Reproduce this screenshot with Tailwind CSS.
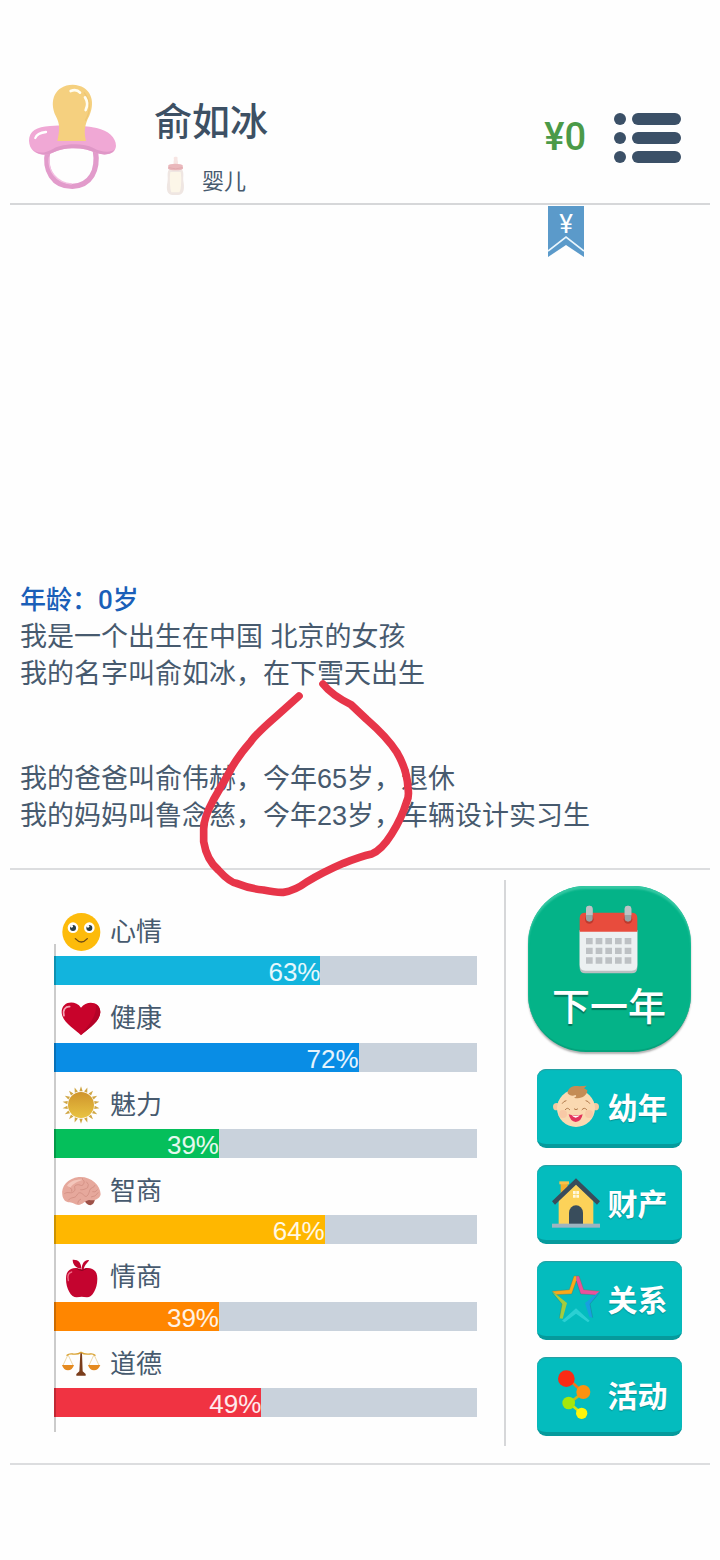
<!DOCTYPE html>
<html lang="zh-CN">
<head>
    <meta charset="UTF-8">
    <meta name="viewport" content="width=device-width, initial-scale=1.0">
    <title>人生模拟</title>
    <script src="https://cdn.jsdelivr.net/npm/@tailwindcss/browser@4"></script>
    <style>
        body {
            font-family: 'Liberation Sans', 'Noto Sans CJK SC', sans-serif;
        }
        .font-ui {
            font-family: Roboto, 'Noto Sans CJK SC', sans-serif;
        }
        .font-cjk {
            font-family: 'Noto Sans CJK SC', sans-serif;
        }
    </style>
</head>
<body class="bg-[#fefefe] text-[#475a6e]">
<div class="relative min-h-screen flex flex-col px-2.5 pt-[84px] pb-[95px]">

    <!-- Header -->
    <header class="relative flex items-start border-b-2 border-[#d6d7d9] pl-[18px] pr-7 pb-[7px]">
        <svg class="w-[89px] h-[106px] shrink-0" viewBox="84 70 267 318" aria-hidden="true">
            <path d="M144 268C130 330 160 377 217 377C272 375 296 330 286 268" fill="none" stroke="#e29bcb" stroke-width="16"/>
            <path d="M148 290C142 330 170 367 215 370" fill="none" stroke="#f3c0e2" stroke-width="4"/>
            <path d="M87 240C87 212 110 198 150 196C200 191 250 194 290 202C325 210 348 230 348 256C346 280 320 286 292 278C268 268 245 262 215 263C180 264 165 275 145 281C112 286 88 270 87 240Z" fill="#f0a8d5"/>
            <path d="M95 262C110 284 140 276 160 264C190 248 250 246 280 262C305 276 335 276 345 266C334 284 310 283 292 278C268 268 245 262 215 263C180 264 165 275 145 281C122 284 104 276 95 262Z" fill="#df97c7"/>
            <path d="M172 241C180 205 180 190 167 165C146 120 165 73 218 72C272 74 288 120 268 165C252 195 252 215 258 241Z" fill="#f5d07f"/>
            <path d="M252 95C276 125 270 155 256 180" fill="none" stroke="#eec673" stroke-width="4"/>
            <path d="M212 91C224 86 234 89 240 96M255 110C264 124 262 138 257 148" fill="none" stroke="#fffdf2" stroke-width="8" stroke-linecap="round"/>
            <path d="M106 232C110 220 120 216 138 214" fill="none" stroke="#fff" stroke-width="7" stroke-linecap="round"/>
        </svg>

        <div class="ml-[37px] pt-4">
            <h1 class="font-ui font-medium text-[38px] leading-[44px] text-[#3d5064]">俞如冰</h1>
            <div class="mt-3 ml-2 flex items-end gap-3.5">
                <svg class="w-[26px] h-10" viewBox="488 288 78 120" aria-hidden="true">
                    <path d="M523 312C522 302 525 300 523 294C523 289 535 289 535 294C533 300 537 302 536 312Z" fill="#f7e5e3"/>
                    <path d="M509 328C501 342 508 352 504 368C500 390 504 404 520 405H536C552 404 556 390 553 368C549 352 556 342 548 328Z" fill="#efe6e2"/>
                    <path d="M513 336C510 352 512 390 516 397H540C546 390 547 352 544 336Z" fill="#fcf6e8"/>
                    <path d="M507 316Q509 311 528 311T550 316L551 326Q546 331 529 331T506 326Z" fill="#eab8bc"/>
                    <path d="M508 323Q528 330 550 323" fill="none" stroke="#dda2a8" stroke-width="2"/>
                </svg>
                <span class="font-ui text-[22px] leading-7">婴儿</span>
            </div>
        </div>

        <div class="ml-auto flex items-center gap-7 pt-[26px]">
            <span class="font-ui font-medium text-[38px] leading-[54px] text-[#4b9a48]">¥0</span>
            <button type="button" aria-label="菜单">
                <svg class="w-[68px] h-[51px]" viewBox="0 0 68 51" fill="#3b5067">
                    <circle cx="6" cy="7" r="6"/>
                    <circle cx="6" cy="26" r="6"/>
                    <circle cx="6" cy="45" r="6"/>
                    <rect x="18" y="1" width="49" height="12" rx="6"/>
                    <rect x="18" y="20" width="49" height="12" rx="6"/>
                    <rect x="18" y="39" width="49" height="12" rx="6"/>
                </svg>
            </button>
        </div>

        <!-- Money ribbon hanging under the header -->
        <button type="button" aria-label="人民币" class="absolute top-full right-[126px] mt-[3px] w-9 h-[51px] font-ui text-[26px] leading-9 text-white">
            <svg class="absolute inset-0 w-9 h-[51px]" viewBox="0 0 36 51" aria-hidden="true">
                <path d="M0 0H36V51L18 39L0 51Z" fill="#5b9aca"/>
                <path d="M0 45L18 31L36 45" fill="none" stroke="#eaf6fc" stroke-width="1.6"/>
            </svg>
            <span class="absolute inset-x-0 top-0">¥</span>
        </button>
    </header>

    <!-- Life log -->
    <main class="flex-1 flex flex-col justify-end px-2.5 pb-[33px] text-[27px] leading-[37px]">
        <h2 class="font-ui font-medium text-[26px] text-[#1a5fb8]">年龄：0岁</h2>
        <p>我是一个出生在中国 北京的女孩</p>
        <p>我的名字叫俞如冰，在下雪天出生</p>
        <p class="mt-[68px]">我的爸爸叫俞伟赫，今年65岁，退休</p>
        <p>我的妈妈叫鲁念慈，今年23岁，车辆设计实习生</p>
    </main>

    <section class="flex border-y-2 border-[#dcdddf] pt-2.5 pb-[17px]">

        <!-- Stats -->
        <div class="relative flex-1 grid grid-rows-6 pl-11 pr-[27px] pt-[19px] pb-[29px] text-[26px]">
            <div class="flex flex-col justify-end">
                <div class="flex items-center gap-[9px] pl-[7px]">
                    <svg class="size-10" viewBox="62 66 120 120" aria-hidden="true">
                        <circle cx="123" cy="126" r="57" fill="#fdbb0b"/>
                        <circle cx="98" cy="113" r="16" fill="#fff"/><circle cx="147" cy="113" r="16" fill="#fff"/>
                        <circle cx="98" cy="114" r="9" fill="#2a3f48"/><circle cx="147" cy="114" r="9" fill="#2a3f48"/>
                        <circle cx="94" cy="109" r="4" fill="#fff"/><circle cx="143" cy="109" r="4" fill="#fff"/>
                        <path d="M105 146Q123 166 141 146" fill="none" stroke="#6d4a16" stroke-width="4" stroke-linecap="round"/>
                    </svg>
                    <span id="stat-mood">心情</span>
                </div>
                <div role="meter" aria-labelledby="stat-mood" aria-valuenow="63" class="mt-1 h-[29px] bg-[#c9d2dc]">
                    <div class="h-full bg-[#12b4dd] text-right leading-8 text-white/90" style="width: 63%">63%</div>
                </div>
            </div>

            <div class="flex flex-col justify-end">
                <div class="flex items-center gap-[9px] pl-[7px]">
                    <svg class="size-10" viewBox="62 324 120 120" aria-hidden="true">
                        <path d="M122 433C105 415 65 394 64 364C64 330 105 326 122 350C140 326 181 332 180 364C178 394 140 415 122 433Z" fill="#c8032b"/>
                        <path d="M122 433C140 415 178 394 180 364C180 352 174 344 166 340C172 375 145 400 122 433Z" fill="#b40227"/>
                        <path d="M71 374C66 355 76 346 88 347" fill="none" stroke="#f7a3b4" stroke-width="5" stroke-linecap="round"/>
                    </svg>
                    <span id="stat-health">健康</span>
                </div>
                <div role="meter" aria-labelledby="stat-health" aria-valuenow="72" class="mt-1 h-[29px] bg-[#c9d2dc]">
                    <div class="h-full bg-[#098de5] text-right leading-8 text-white/90" style="width: 72%">72%</div>
                </div>
            </div>

            <div class="flex flex-col justify-end">
                <div class="flex items-center gap-[9px] pl-[7px]">
                    <svg class="size-10" viewBox="-60 -60 120 120" aria-hidden="true">
                        <defs>
                            <linearGradient id="sun-fill" x1="0" y1="0" x2="0" y2="1">
                                <stop offset="0" stop-color="#cf942c"/>
                                <stop offset="1" stop-color="#e9c341"/>
                            </linearGradient>
                            <path id="sun-ray" d="M-5 -41L0 -56L5 -41Z" fill="#cfa543"/>
                        </defs>
                        <circle r="39" fill="url(#sun-fill)"/>
                        <use href="#sun-ray"/><use href="#sun-ray" transform="rotate(20)"/><use href="#sun-ray" transform="rotate(40)"/>
                        <use href="#sun-ray" transform="rotate(60)"/><use href="#sun-ray" transform="rotate(80)"/><use href="#sun-ray" transform="rotate(100)"/>
                        <use href="#sun-ray" transform="rotate(120)"/><use href="#sun-ray" transform="rotate(140)"/><use href="#sun-ray" transform="rotate(160)"/>
                        <use href="#sun-ray" transform="rotate(180)"/><use href="#sun-ray" transform="rotate(200)"/><use href="#sun-ray" transform="rotate(220)"/>
                        <use href="#sun-ray" transform="rotate(240)"/><use href="#sun-ray" transform="rotate(260)"/><use href="#sun-ray" transform="rotate(280)"/>
                        <use href="#sun-ray" transform="rotate(300)"/><use href="#sun-ray" transform="rotate(320)"/><use href="#sun-ray" transform="rotate(340)"/>
                    </svg>
                    <span id="stat-charm">魅力</span>
                </div>
                <div role="meter" aria-labelledby="stat-charm" aria-valuenow="39" class="mt-1 h-[29px] bg-[#c9d2dc]">
                    <div class="h-full bg-[#05bf5b] text-right leading-8 text-white/90" style="width: 39%">39%</div>
                </div>
            </div>

            <div class="flex flex-col justify-end">
                <div class="flex items-center gap-[9px] pl-[7px]">
                    <svg class="size-10" viewBox="62 34 120 120" aria-hidden="true">
                        <path d="M132 120Q136 134 150 137Q162 134 164 118Z" fill="#9d5148"/>
                        <path d="M66 106C62 80 82 56 115 52C150 49 180 74 181 104C178 120 160 124 146 121C134 124 128 134 114 136C104 136 98 128 88 128C76 128 68 120 66 106Z" fill="#e6a89c"/>
                        <path d="M80 78C88 64 110 58 128 60C110 66 98 72 90 84Z" fill="#f3c6bb"/>
                        <path d="M72 102C84 94 90 104 100 96S96 80 108 76S124 84 130 72S120 60 128 56M84 122C92 110 104 118 110 106S124 100 132 108S146 102 148 92S162 86 164 76M88 84Q98 88 94 96M138 66Q148 74 142 84S130 92 120 90M112 132Q112 122 122 118M152 112Q166 112 174 98M156 96Q164 100 172 90" fill="none" stroke="#cc887c" stroke-width="2"/>
                    </svg>
                    <span id="stat-iq">智商</span>
                </div>
                <div role="meter" aria-labelledby="stat-iq" aria-valuenow="64" class="mt-1 h-[29px] bg-[#c9d2dc]">
                    <div class="h-full bg-[#ffb700] text-right leading-8 text-white/90" style="width: 64%">64%</div>
                </div>
            </div>

            <div class="flex flex-col justify-end">
                <div class="flex items-center gap-[9px] pl-[7px]">
                    <svg class="size-10" viewBox="62 292 120 120" aria-hidden="true">
                        <path d="M123 324C105 322 97 310 97 297C114 296 123 306 123 324ZM124 326C124 308 134 296 146 298C144 306 134 308 130 326Z" fill="#c1042f"/>
                        <path d="M124 326C140 318 171 318 171 354C171 384 156 410 140 410Q130 408 124 408Q118 408 109 410C92 410 77 384 77 354C77 318 108 318 124 326Z" fill="#c4042f"/>
                        <path d="M112 326Q125 334 138 324" fill="none" stroke="#8b0220" stroke-width="3"/>
                        <path d="M84 360C80 344 86 336 94 334" fill="none" stroke="#ef6c86" stroke-width="4" stroke-linecap="round"/>
                    </svg>
                    <span id="stat-eq">情商</span>
                </div>
                <div role="meter" aria-labelledby="stat-eq" aria-valuenow="39" class="mt-1 h-[29px] bg-[#c9d2dc]">
                    <div class="h-full bg-[#ff8600] text-right leading-8 text-white/90" style="width: 39%">39%</div>
                </div>
            </div>

            <div class="flex flex-col justify-end">
                <div class="flex items-center gap-[9px] pl-[7px]">
                    <svg class="size-10" viewBox="62 552 120 120" aria-hidden="true">
                        <path d="M83 584L68 616M83 584L98 616M161 584L146 616M161 584L176 616" stroke="#e3c37c" stroke-width="2"/>
                        <path d="M80 586Q86 580 98 582Q112 584 122 577Q132 584 148 582Q158 580 164 586" fill="none" stroke="#d9a233" stroke-width="4" stroke-linecap="round"/>
                        <path d="M65 615H101Q96 631 83 631T65 615ZM143 615H180Q174 631 161 631T143 615Z" fill="#e58a1f"/>
                        <path d="M120 580H125L127 634L136 642V647H108V642L117 634Z" fill="#7a3d1c"/>
                    </svg>
                    <span id="stat-morals">道德</span>
                </div>
                <div role="meter" aria-labelledby="stat-morals" aria-valuenow="49" class="mt-1 h-[29px] bg-[#c9d2dc]">
                    <div class="h-full bg-[#f03342] text-right leading-8 text-white/90" style="width: 49%">49%</div>
                </div>
            </div>

            <!-- Chart axis -->
            <div class="absolute left-11 top-16 bottom-3.5 w-0.5 bg-black/20"></div>
        </div>

        <!-- Actions -->
        <nav class="w-[206px] shrink-0 flex flex-col items-center gap-[17px] border-l-2 border-[#d6d7d9] pl-0.5 pt-1.5 pb-2.5 font-cjk text-white">
            <button type="button" class="flex flex-col items-center w-[163px] h-[166px] pt-[19px] rounded-[58px] border-b-2 border-[#04a37c] bg-[#04b388] shadow-[inset_0_3px_2px_#35c8a3,0_2px_2px_#0000004d]">
                <svg class="w-[60px] h-[70px]" viewBox="240 104 180 210" aria-hidden="true">
                    <path d="M242 180H415V292Q415 309 398 309H259Q242 309 242 292Z" fill="#b9c0c1"/>
                    <path d="M242 180H415V284Q415 301 398 301H259Q242 301 242 284Z" fill="#ecf0f1"/>
                    <path d="M242 184V143Q242 127 259 127H398Q415 127 415 143V184Z" fill="#e84c3d"/>
                    <circle cx="271" cy="147" r="13" fill="#bd3a2e"/><circle cx="387" cy="147" r="13" fill="#bd3a2e"/>
                    <rect x="261" y="106" width="20" height="48" rx="10" fill="#9aa3a5"/>
                    <rect x="377" y="106" width="20" height="48" rx="10" fill="#9aa3a5"/>
                    <path d="M261 134V116A10 10 0 0 1 281 116V134ZM377 134V116A10 10 0 0 1 397 116V134Z" fill="#bcc3c5"/>
                    <path d="M261 203h20v19h-20zM290 203h20v19h-20zM319 203h20v19h-20zM348 203h20v19h-20zM377 203h20v19h-20zM261 232h20v19h-20zM290 232h20v19h-20zM319 232h20v19h-20zM348 232h20v19h-20zM377 232h20v19h-20zM261 261h20v19h-20zM290 261h20v19h-20zM319 261h20v19h-20zM348 261h20v19h-20zM377 261h20v19h-20z" fill="#bdc1c4"/>
                </svg>
                <span class="mt-1 font-medium text-[38px] leading-[50px] text-shadow-[0_2px_1px_#00000059]">下一年</span>
            </button>

            <button type="button" class="flex items-center gap-2 w-[145px] h-[79px] pl-[15px] rounded-[9px] border-b-4 border-[#069a9c] bg-[#04bcbe] shadow-[inset_0_1px_1px_#2a9da0]">
                <svg class="size-12" viewBox="96 76 144 144" aria-hidden="true">
                    <circle cx="110" cy="147" r="11" fill="#f3c9a0"/><circle cx="226" cy="147" r="11" fill="#f3c9a0"/>
                    <ellipse cx="168" cy="152" rx="57" ry="56" fill="#fad9b1"/>
                    <path d="M143 107C142 90 160 82 178 86L200 84L192 92L202 98C202 116 180 126 162 120C170 118 170 114 166 112C158 116 148 114 143 107Z" fill="#c48c55"/>
                    <circle cx="129" cy="169" r="12" fill="#f8c9a6"/><circle cx="207" cy="169" r="12" fill="#f8c9a6"/>
                    <path d="M136 156Q142 147 149 156M186 156Q193 147 200 156M127 137Q131 130 138 129M198 129Q205 130 209 137M163 154Q168 159 173 154" fill="none" stroke="#b07a4c" stroke-width="3" stroke-linecap="round"/>
                    <path d="M146 170Q167 177 188 170Q184 192 167 193Q151 192 146 170Z" fill="#e3345c"/>
                    <path d="M155 173Q167 177 179 173Q176 179 167 180Q159 179 155 173Z" fill="#fff"/>
                </svg>
                <span class="font-bold text-[30px] text-shadow-[0_1px_1px_#00000040]">幼年</span>
            </button>

            <button type="button" class="flex items-center gap-2 w-[145px] h-[79px] pl-[15px] rounded-[9px] border-b-4 border-[#069a9c] bg-[#04bcbe] shadow-[inset_0_1px_1px_#2a9da0]">
                <svg class="w-12 h-[50px]" viewBox="96 358 144 150" aria-hidden="true">
                    <path d="M122 372H143V400L122 420Z" fill="#f1ae2e"/>
                    <rect x="118" y="368" width="29" height="9" fill="#f7c14a"/>
                    <path d="M116 425L168 374L220 425V496H116Z" fill="#fcd259"/>
                    <path d="M96 428L168 359L240 428L231 438L168 378L105 438Z" fill="#394d5c"/>
                    <path d="M147 496V462A21 22 0 0 1 189 462V496Z" fill="#394d5c"/>
                    <path d="M159 397h8v9h-8zM169 397h8v9h-8zM159 408h8v9h-8zM169 408h8v9h-8z" fill="#fff9df"/>
                    <rect x="96" y="495" width="144" height="12" fill="#9db4c0"/>
                </svg>
                <span class="font-bold text-[30px] text-shadow-[0_1px_1px_#00000040]">财产</span>
            </button>

            <button type="button" class="flex items-center gap-2 w-[145px] h-[79px] pl-[15px] rounded-[9px] border-b-4 border-[#069a9c] bg-[#04bcbe] shadow-[inset_0_1px_1px_#2a9da0]">
                <svg class="size-12" viewBox="96 78 144 144" aria-hidden="true">
                    <path d="M96 127L148 122L162 81H169V96L155 135L110 137Z" fill="#fba919"/>
                    <path d="M169 81H177L191 122L239 127L226 138L182 135L169 96Z" fill="#e8529c"/>
                    <path d="M96 129L110 137L141 162L128 209L118 208L126 165Z" fill="#a4cc3e"/>
                    <path d="M239 129L226 138L195 162L208 203L218 206L210 165Z" fill="#189fe0"/>
                    <path d="M126 215L168 178L209 215L204 220L168 194L134 220Z" fill="#2bd0d3"/>
                    <path d="M96 127L148 122L162 81H177L191 122L239 127" fill="none" stroke="#7c6f3f" stroke-opacity=".55" stroke-width="2"/>
                    <path d="M110 137L155 135L169 96L182 135L226 138M96 130L126 165L118 208M239 130L210 165L218 206" fill="none" stroke="#236f70" stroke-opacity=".5" stroke-width="2"/>
                </svg>
                <span class="font-bold text-[30px] text-shadow-[0_1px_1px_#00000040]">关系</span>
            </button>

            <button type="button" class="flex items-center gap-2 w-[145px] h-[79px] pl-[15px] rounded-[9px] border-b-4 border-[#069a9c] bg-[#04bcbe] shadow-[inset_0_1px_1px_#2a9da0]">
                <svg class="w-12 h-[50px]" viewBox="96 365 144 150" aria-hidden="true">
                    <path d="M150 396L184 428" stroke="#f0741c" stroke-width="8"/>
                    <path d="M190 432L148 464" stroke="#c6b81a" stroke-width="8"/>
                    <path d="M148 464L184 495" stroke="#cfe50d" stroke-width="8"/>
                    <circle cx="139" cy="391" r="25" fill="#fb2a14"/>
                    <circle cx="190" cy="431" r="21" fill="#fd9210"/>
                    <circle cx="146" cy="464" r="19" fill="#a5e70c"/>
                    <circle cx="185" cy="495" r="17" fill="#fdf50b"/>
                </svg>
                <span class="font-bold text-[30px] text-shadow-[0_1px_1px_#00000040]">活动</span>
            </button>
        </nav>
    </section>

    <!-- Hand-drawn marker loop -->
    <svg class="absolute left-[180px] top-[670px] w-[250px] h-[240px] pointer-events-none" viewBox="0 0 750 720" aria-hidden="true">
        <path d="M357 78L290 138Q230 190 212 215Q168 265 145 312L100 390Q70 445 71 480V515Q80 570 115 600Q150 638 170 640Q210 656 250 660Q290 668 310 667Q345 662 380 636Q430 606 490 580Q540 560 575 552Q605 540 635 492Q665 445 680 395Q688 380 684 355Q682 300 650 246Q620 200 560 148L513 104Q455 75 429 42" fill="none" stroke="#e73549" stroke-width="23" stroke-linecap="round" stroke-linejoin="round"/>
    </svg>
</div>
</body>
</html>
